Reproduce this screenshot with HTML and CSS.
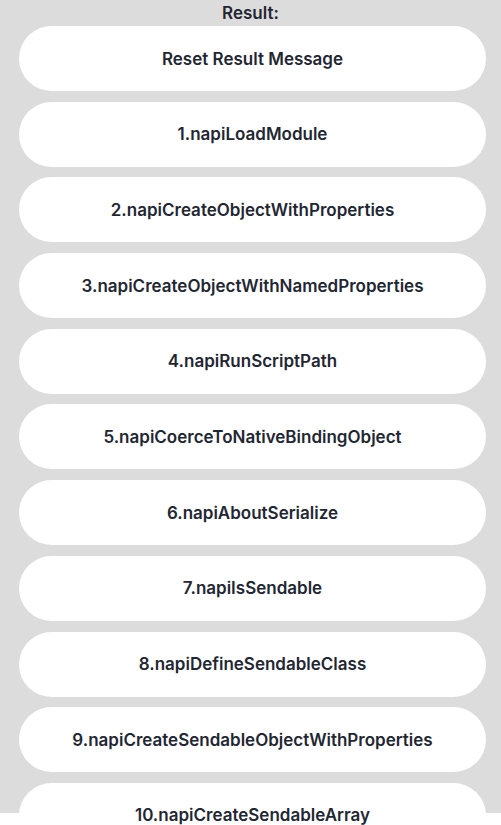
FILE: index.html
```html
<!DOCTYPE html>
<html>
<head>
<meta charset="utf-8">
<link rel="stylesheet" href="styles.css">
</head>
<body>
<div class="page">
  <div class="screen">
    <div class="title">Result:</div>
    <div class="list">
      <div class="btn">Reset Result Message</div>
      <div class="btn">1.napiLoadModule</div>
      <div class="btn">2.napiCreateObjectWithProperties</div>
      <div class="btn">3.napiCreateObjectWithNamedProperties</div>
      <div class="btn">4.napiRunScriptPath</div>
      <div class="btn">5.napiCoerceToNativeBindingObject</div>
      <div class="btn">6.napiAboutSerialize</div>
      <div class="btn">7.napiIsSendable</div>
      <div class="btn">8.napiDefineSendableClass</div>
      <div class="btn">9.napiCreateSendableObjectWithProperties</div>
      <div class="btn">10.napiCreateSendableArray</div>
    </div>
  </div>
</div>
</body>
</html>
```
FILE: styles.css
```css
html, body {
  margin: 0;
  padding: 0;
  background: #ffffff;
}
.page {
  height: 825px;
  overflow: hidden;
}
.screen {
  height: 813px;
  background: #dcdcdc;
  font-family: "Inter", "Noto Sans", sans-serif;
  color: #1f2733;
}
.title {
  height: 26px;
  line-height: 26px;
  text-align: center;
  font-size: 17px;
  font-weight: 600;
}
.list {
  display: flex;
  flex-direction: column;
  gap: 10.7px;
  padding: 0 15px 0 19px;
}
.btn {
  height: 65px;
  border-radius: 33px;
  background: #ffffff;
  display: flex;
  align-items: center;
  justify-content: center;
  font-size: 17px;
  font-weight: 600;
  flex-shrink: 0;
}
```
